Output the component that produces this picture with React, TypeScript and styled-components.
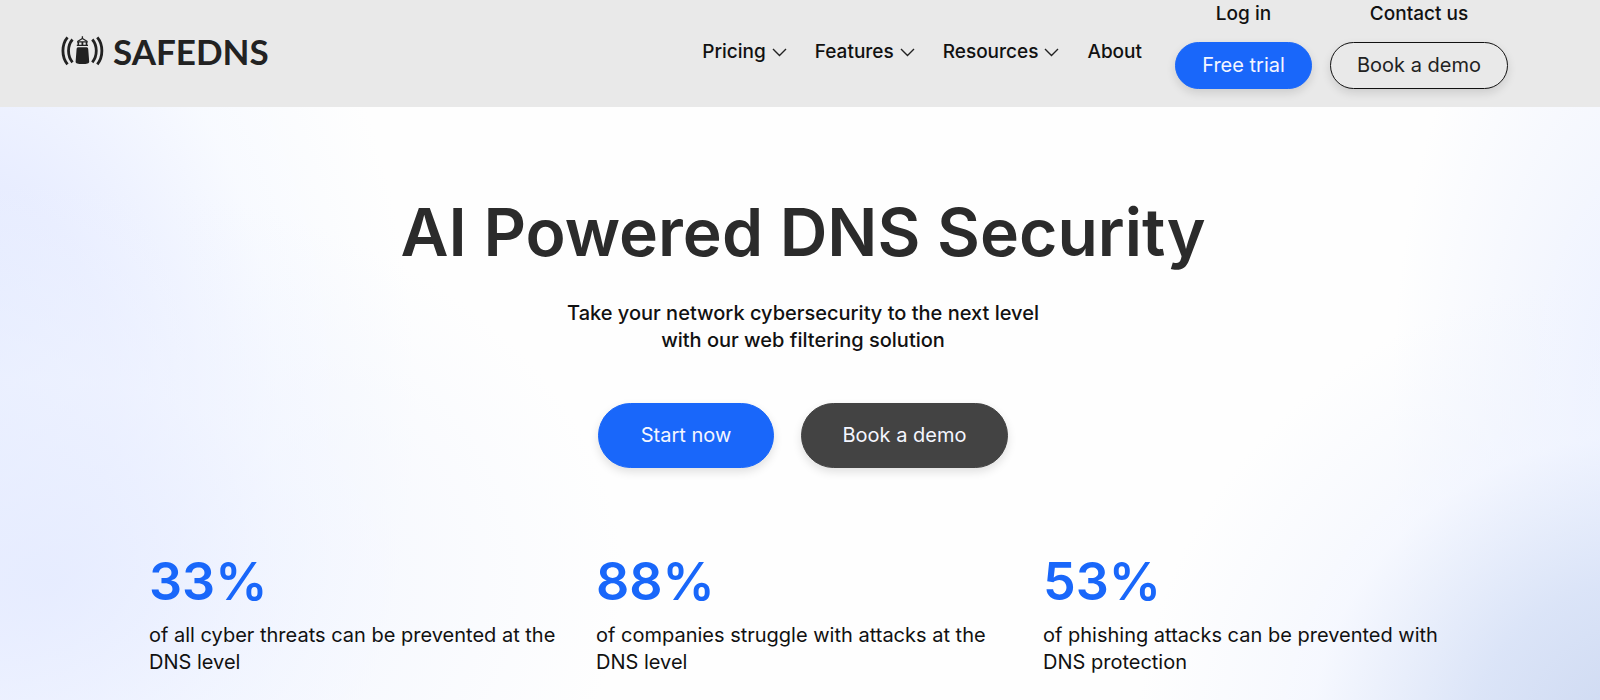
import React from "react";
import styled, { createGlobalStyle } from "styled-components";

const GlobalStyle = createGlobalStyle`
  *, *::before, *::after { box-sizing: border-box; }
  html, body, #root { min-height: 100vh; }
  body {
    margin: 0;
    font-family: Inter, "Open Sans", sans-serif;
    color: #111;
    background: #fff;
  }
  #root { display: flex; flex-direction: column; }
  h1, p, dl, dd, ul { margin: 0; padding: 0; }
`;

const Header = styled.header`
  display: flex;
  align-items: flex-start;
  background: #e9e9e9;
  padding: 0 92px 18px 61px;
`;

const LogoLink = styled.a`
  display: flex;
  align-items: center;
  gap: 9px;
  margin-top: 36px;
  color: #222;
  text-decoration: none;
`;

const LogoText = styled.span`
  font-family: Lato, sans-serif;
  font-size: 35px;
  line-height: 30px;
  font-weight: 700;
`;

const Nav = styled.nav`
  margin-left: auto;
  padding-top: 41px;
`;

const NavList = styled.ul`
  display: flex;
  gap: 28px;
  list-style: none;
`;

const NavButton = styled.button`
  display: flex;
  align-items: center;
  gap: 6px;
  padding: 0;
  border: 0;
  background: none;
  color: inherit;
  font: 500 19px/22px Inter, sans-serif;
  cursor: pointer;
`;

const NavLink = styled.a`
  display: block;
  color: inherit;
  text-decoration: none;
  font-size: 19px;
  line-height: 22px;
  font-weight: 500;
`;

const Actions = styled.div`
  display: flex;
  gap: 18px;
  margin-left: 33px;
`;

const ActionColumn = styled.div`
  display: flex;
  flex-direction: column;
  align-items: center;
  gap: 17px;
  padding-top: 3px;
`;

const PillButton = styled.button<{ $tone: "blue" | "dark" | "outline"; $width: number; $large?: boolean }>`
  width: ${(p) => p.$width}px;
  height: ${(p) => (p.$large ? 65 : 47)}px;
  padding: 0 0 2px;
  border: 1px solid ${(p) => ({ blue: "#1967fa", dark: "#434343", outline: "#111" })[p.$tone]};
  border-radius: ${(p) => (p.$large ? 33 : 24)}px;
  background: ${(p) => ({ blue: "#1967fa", dark: "#434343", outline: "#e9e9e9" })[p.$tone]};
  color: ${(p) => (p.$tone === "outline" ? "#222" : "#f4f6ff")};
  font: 400 20px/24px Inter, sans-serif;
  box-shadow: 0 4px 10px rgba(0, 0, 0, 0.12);
  cursor: pointer;
`;

const Hero = styled.main`
  flex: 1;
  display: flex;
  flex-direction: column;
  align-items: center;
  padding: 85px 143px 24px 149px;
  background:
    radial-gradient(ellipse 32% 80% at 103% 108%, #cbd7f0 0%, rgba(216, 226, 247, 0.9) 35%, rgba(240, 244, 255, 0.6) 66%, rgba(255, 255, 255, 0) 100%),
    radial-gradient(ellipse 16% 90% at 103% 50%, rgba(232, 238, 255, 0.9) 0%, rgba(255, 255, 255, 0) 100%),
    radial-gradient(ellipse 36% 68% at 3% 80%, rgba(230, 236, 255, 0.8) 0%, rgba(240, 244, 255, 0.6) 50%, rgba(255, 255, 255, 0) 100%),
    radial-gradient(ellipse 29% 110% at -3% 50%, #e0e8ff 0%, #e8edff 35%, rgba(246, 249, 255, 0.8) 70%, rgba(255, 255, 255, 0) 100%),
    #fefefe;
`;

const Title = styled.h1`
  font-size: 66px;
  line-height: 80px;
  font-weight: 600;
  color: #2b2b2b;
  text-align: center;
`;

const Lead = styled.p`
  margin-top: 28px;
  font-size: 20px;
  line-height: 27px;
  font-weight: 500;
  text-align: center;
`;

const HeroButtons = styled.div`
  display: flex;
  gap: 27px;
  margin-top: 49px;
`;

const Stats = styled.dl`
  display: grid;
  grid-template-columns: repeat(3, 1fr);
  column-gap: 33px;
  align-self: stretch;
  margin-top: 82px;
`;

const Stat = styled.div`
  display: flex;
  flex-direction: column-reverse;
  justify-content: flex-end;
  gap: 8px;
`;

const StatValue = styled.dd`
  font-size: 52px;
  line-height: 64px;
  font-weight: 600;
  color: #1967fa;
`;

const StatLabel = styled.dt`
  font-size: 20px;
  line-height: 27px;
`;

const Lighthouse = () => (
  <svg width="43" height="30" viewBox="0 0 43 30" fill="none" aria-hidden="true">
    <g stroke="#222" strokeWidth="2.8">
      <path d="M6.500 1.300C.4 8.500.4 21 6.500 28.300" />
      <path d="M11.500 3.500C6.200 9.500 6.200 20 11.500 26.300" />
      <path d="M36.300 1.300C42.400 8.500 42.400 21 36.300 28.300" />
      <path d="M31.300 3.500C36.600 9.500 36.600 20 31.300 26.300" />
    </g>
    <path d="M21.400 .3v2.200M16.500 5.500l4.900-3 4.900 3" stroke="#222" strokeWidth="1.300" />
    <path d="M16 5.300h10.800v1.200H16zM16.500 6.500h1.600V9h-1.600zM20.500 6.500h1.800V9h-1.800zM24.700 6.500h1.600V9h-1.600zM15.800 8.800H27V10H15.800z" fill="#222" />
    <path d="M17.600 11.200h7.600c1.300 0 1.900.6 2 1.800l1 12.800c.1 1.600-2.200 2.300-6.800 2.300s-6.900-.7-6.800-2.300l1-12.800c.1-1.200.7-1.800 2-1.800z" fill="#222" />
  </svg>
);

const Chevron = () => (
  <svg width="15" height="9" viewBox="0 0 15 9" fill="none" aria-hidden="true">
    <path d="M1 1l6.500 6.500L14 1" stroke="#222" strokeWidth="1.400" />
  </svg>
);

const menus = ["Pricing", "Features", "Resources"];

const stats = [
  { value: "33%", lines: ["of all cyber threats can be prevented at the", "DNS level"] },
  { value: "88%", lines: ["of companies struggle with attacks at the", "DNS level"] },
  { value: "53%", lines: ["of phishing attacks can be prevented with", "DNS protection"] },
];

export default function App() {
  return (
    <>
      <GlobalStyle />
      <Header>
        <LogoLink href="#">
          <Lighthouse />
          <LogoText>SAFEDNS</LogoText>
        </LogoLink>
        <Nav>
          <NavList>
            {menus.map((name) => (
              <li key={name}>
                <NavButton type="button">
                  {name}
                  <Chevron />
                </NavButton>
              </li>
            ))}
            <li>
              <NavLink href="#about">About</NavLink>
            </li>
          </NavList>
        </Nav>
        <Actions>
          <ActionColumn>
            <NavLink href="#login">Log in</NavLink>
            <PillButton $tone="blue" $width={137}>Free trial</PillButton>
          </ActionColumn>
          <ActionColumn>
            <NavLink href="#contact">Contact us</NavLink>
            <PillButton $tone="outline" $width={178}>Book a demo</PillButton>
          </ActionColumn>
        </Actions>
      </Header>
      <Hero>
        <Title>AI Powered DNS Security</Title>
        <Lead>
          Take your network cybersecurity to the next level
          <br />
          with our web filtering solution
        </Lead>
        <HeroButtons>
          <PillButton $tone="blue" $width={176} $large>Start now</PillButton>
          <PillButton $tone="dark" $width={207} $large>Book a demo</PillButton>
        </HeroButtons>
        <Stats>
          {stats.map((s) => (
            <Stat key={s.value}>
              <StatLabel>
                {s.lines[0]}
                <br />
                {s.lines[1]}
              </StatLabel>
              <StatValue>{s.value}</StatValue>
            </Stat>
          ))}
        </Stats>
      </Hero>
    </>
  );
}
